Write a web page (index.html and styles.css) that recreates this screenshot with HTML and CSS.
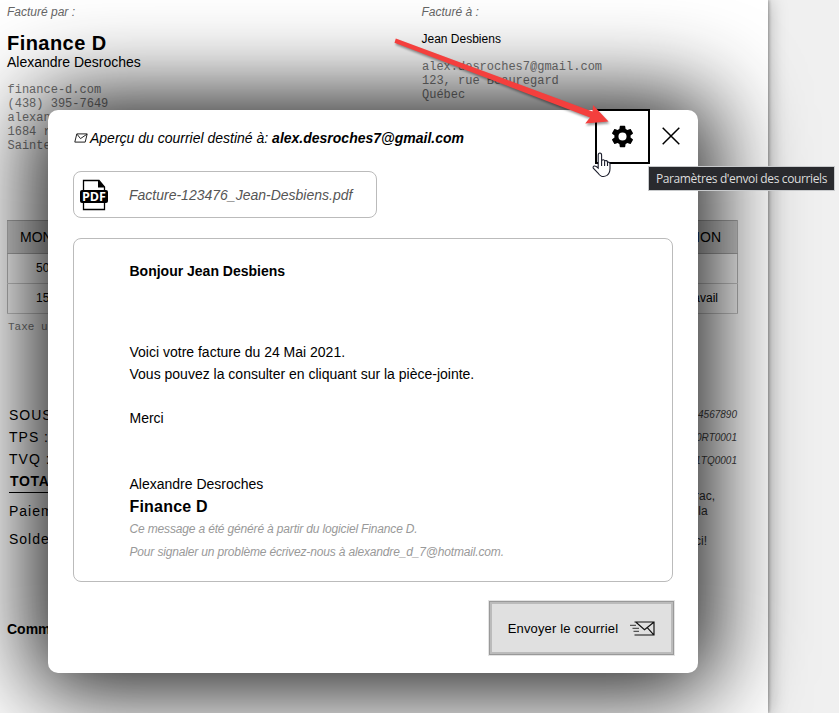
FILE: index.html
```html
<!DOCTYPE html>
<html lang="fr">
<head>
<meta charset="utf-8">
<title>Finance D</title>
<link rel="stylesheet" href="styles.css">
</head>
<body>
<main class="paper">
  <section class="parties">
    <div class="from">
      <p class="label">Facturé par :</p>
      <h1>Finance D</h1>
      <p class="owner">Alexandre Desroches</p>
      <address>finance-d.com<br>(438) 395-7649<br>alexan<br>1684 r<br>Sainte</address>
    </div>
    <div class="to">
      <p class="label">Facturé à :</p>
      <p class="client">Jean Desbiens</p>
      <address>alex.desroches7@gmail.com<br>123, rue Beauregard<br>Québec</address>
    </div>
  </section>
  <table class="items">
    <thead><tr><th class="amount">MON</th><th class="desc">ION</th></tr></thead>
    <tbody>
      <tr><td class="amount">50</td><td class="desc"></td></tr>
      <tr><td class="amount">15</td><td class="desc">avail</td></tr>
    </tbody>
  </table>
  <p class="tax-note">Taxe u</p>
  <section class="summary">
    <div class="totals">
      <p>SOUS</p><p>TPS :</p><p>TVQ :</p><p class="total">TOTA</p>
      <p class="payment">Paiem</p><p class="balance">Solde</p>
    </div>
    <div class="legal">
      <p class="number">4567890</p><p class="number">0RT0001</p><p class="number">1TQ0001</p>
      <div class="thanks">rac,<br>&nbsp;la<br><br>ci!</div>
    </div>
  </section>
  <p class="comments">Comm</p>
</main>

<section class="modal">
  <header class="modal-head">
    <h2><svg class="mail" viewBox="0 0 14 10"><path d="M2.8 .9H13.2L11.2 9.1H.8zM3 1.2L6.5 5.6L13 1.2" /></svg>Aperçu du courriel destiné à: <b>alex.desroches7@gmail.com</b></h2>
    <button class="settings" aria-label="Paramètres"><svg viewBox="0 0 24 24"><path d="M19.14 12.94c.04-.3.06-.61.06-.94s-.02-.64-.07-.94l2.03-1.58c.18-.14.23-.41.12-.61l-1.92-3.32c-.12-.22-.37-.29-.59-.22l-2.39.96c-.5-.38-1.03-.7-1.62-.94l-.36-2.54c-.04-.24-.24-.41-.48-.41h-3.84c-.24 0-.43.17-.47.41l-.36 2.54c-.59.24-1.13.57-1.62.94l-2.39-.96c-.22-.08-.47 0-.59.22L2.74 8.87c-.12.21-.08.47.12.61l2.03 1.58c-.05.3-.09.63-.09.94s.02.64.07.94l-2.03 1.58c-.18.14-.23.41-.12.61l1.92 3.32c.12.22.37.29.59.22l2.39-.96c.5.38 1.03.7 1.62.94l.36 2.54c.05.24.24.41.48.41h3.84c.24 0 .44-.17.47-.41l.36-2.54c.59-.24 1.13-.56 1.62-.94l2.39.96c.22.08.47 0 .59-.22l1.92-3.32c.12-.22.07-.47-.12-.61zM12 15.6A3.6 3.6 0 1 1 12 8.4a3.6 3.6 0 0 1 0 7.2z"/></svg></button>
    <button class="close" aria-label="Fermer"><svg viewBox="0 0 18 18"><path d="M.7 .7L17.3 17.3M17.3 .7L.7 17.3"/></svg></button>
  </header>
  <div class="attachment">
    <svg class="pdf" viewBox="0 0 28 32"><path class="sheet" d="M3.5 11V1.5H19L24.5 8V11M3.5 23V30.5H24.5V23"/><path d="M18 1L25 8.5H18z"/><rect y="11" width="28" height="13" rx="2"/><text x="14" y="21.8" textLength="24" lengthAdjust="spacingAndGlyphs">PDF</text></svg>
    <span>Facture-123476_Jean-Desbiens.pdf</span>
  </div>
  <article class="message">
    <p class="greeting">Bonjour Jean Desbiens</p>
    <p>Voici votre facture du 24 Mai 2021.</p>
    <p>Vous pouvez la consulter en cliquant sur la pièce-jointe.</p>
    <p class="merci">Merci</p>
    <p>Alexandre Desroches</p>
    <p class="company">Finance D</p>
    <p class="small">Ce message a été généré à partir du logiciel Finance D.</p>
    <p class="small">Pour signaler un problème écrivez-nous à alexandre_d_7@hotmail.com.</p>
  </article>
  <button class="send"><span>Envoyer le courriel</span><svg viewBox="0 0 25 15"><path d="M4.5 1H24V14H4.5M6 1.2L14.5 8.7L23.8 1.2M17.5 6.8L23.8 13.8"/><path class="speed" d="M0 4.4H6M2.5 7.4H9M3.5 10.4H9"/></svg></button>
</section>

<div class="tooltip">Paramètres d'envoi des courriels</div>
<svg class="arrow" viewBox="0 0 220 95"><path d="M5.8 3.5L202.5 76.6L203 70L218.5 86.5L195.2 88.4L200 82.5L4.5 7.8z"/></svg>
<svg class="cursor" viewBox="0 0 20 26"><path d="M6.2 15.5V3.3Q6.2 1 7.9 1T9.6 3.3V9Q10 7.6 11.4 7.8T12.6 9.4Q13.2 8.3 14.4 8.6T15.5 10.3Q18 9.6 18 12.2V16.5Q18 21 15 23.4Q12.5 25 9.5 24.2Q7.5 23.5 6 21L1.3 16.2Q.6 14.7 2.2 14Q3.8 13.7 6.2 16zM9.6 8V14M12.6 9.4V14M15.5 10.3V14"/></svg>
</body>
</html>
```
FILE: styles.css
```css
* { box-sizing: border-box; }
html, body { height: 100%; }
body {
  margin: 0;
  position: relative;
  overflow: hidden;
  background: #f0f0f0;
  color: #000;
  font-family: "Liberation Sans", Arial, sans-serif;
  font-size: 14px;
}
p, h1, h2 { margin: 0; }
button { font: inherit; color: inherit; padding: 0; border: 0; background: none; }

.paper {
  width: 768px;
  height: 713px;
  padding: 4px 30px 0 7px;
  background: #fff;
  box-shadow: 0 0 18px rgba(0, 0, 0, .3), 1px 0 3px rgba(0, 0, 0, .3);
}
.parties { display: grid; grid-template-columns: 414.5px 1fr; height: 216px; }
.label { font-size: 12px; line-height: 16px; font-style: italic; color: #666; }
h1 { margin-top: 11px; font-size: 20px; line-height: 24px; letter-spacing: .45px; }
.owner { line-height: 15px; }
.client { margin-top: 11px; font-size: 12px; line-height: 16px; }
address {
  font: 12px/14px "Liberation Mono", monospace;
  color: #777;
  margin-top: 13px;
  padding-left: .5px;
}
.items { width: 731px; border-collapse: collapse; table-layout: fixed; font-size: 12px; }
.items th { height: 33px; padding: 0; background: #d3d3d3; border: 1px solid #aaa; border-width: 1px 0; font-size: 14px; font-weight: 400; }
.items td { height: 30px; padding: 0 0 2px; border-bottom: 1px solid #ccc; }
.items .amount { text-align: left; padding-left: 28px; border-left: 1px solid #bbb; }
.items .desc { text-align: right; padding-right: 19px; border-right: 1px solid #bbb; }
.items th.amount { padding-left: 12px; }
.items th.desc { padding-right: 16px; }
.tax-note { margin: 6px 0 0 1px; font: 11px/14px "Liberation Mono", monospace; color: #777; }
.summary { display: flex; justify-content: space-between; height: 217px; margin-top: 70px; }
.totals { margin-left: 2px; width: 300px; letter-spacing: 1px; line-height: 22px; }
.total { font-weight: 700; border-bottom: 1px solid #000; padding-left: 1px; letter-spacing: .7px; }
.payment { margin-top: 7px; }
.balance { margin-top: 6px; }
.legal { width: 60px; margin: -1px 1px 0 0; }
.number { font-size: 10px; line-height: 23px; font-style: italic; text-align: right; color: #444; }
.thanks { margin: 17px 0 0 18px; font-size: 12px; line-height: 15px; color: #333; }
.comments { line-height: 16px; font-weight: 700; }

.modal {
  position: absolute;
  left: 48px;
  top: 110px;
  width: 650px;
  height: 563px;
  padding: 0 25px;
  display: flex;
  flex-direction: column;
  background: #fff;
  border-radius: 10px;
  box-shadow: 0 3px 90px 16px rgba(0, 0, 0, .9);
}
.modal-head { display: flex; height: 61px; margin-right: -7px; }
h2 { flex: 1; font-size: 14px; line-height: 20px; font-weight: 400; font-style: italic; padding-top: 18px; white-space: nowrap; }
.mail { width: 14px; height: 10px; margin: 0 2px 0 1px; fill: none; stroke: #222; }
.settings { width: 55px; height: 55px; margin-top: -1px; border: 2px solid #000; display: grid; place-items: center; }
.settings svg { width: 27px; height: 27px; }
.close { width: 18px; height: 18px; margin: 17px 0 0 12px; }
.close svg { display: block; width: 18px; height: 18px; fill: none; stroke: #000; stroke-width: 1.5; }
.attachment {
  width: 304px;
  height: 47px;
  padding-left: 6px;
  display: flex;
  align-items: center;
  gap: 21px;
  border: 1px solid #bbb;
  border-radius: 8px;
  color: #555;
  font-style: italic;
}
.pdf { width: 28px; height: 32px; }
.pdf .sheet { fill: none; stroke: #000; stroke-width: 1.3; }
.pdf text { fill: #fff; font: 700 12px "Open Sans", sans-serif; text-anchor: middle; }
.message {
  width: 600px;
  height: 344px;
  margin-top: 20px;
  padding: 21px 40px 0 55.5px;
  border: 1px solid #bbb;
  border-radius: 8px;
  line-height: 22px;
}
.greeting { font-weight: 700; margin-bottom: 59px; }
.merci { margin: 22px 0 44px; }
.company { font-size: 16px; line-height: 23px; font-weight: 700; letter-spacing: .2px; }
.small { font-size: 12px; line-height: 23px; font-style: italic; letter-spacing: -.16px; color: #999; }
.send {
  width: 185px;
  height: 54px;
  margin: 19px 0 0 416px;
  flex: none;
  display: flex;
  align-items: center;
  justify-content: center;
  gap: 12px;
  background: #e0e0e0;
  border: 1px solid #999;
  box-shadow: inset 0 0 0 2px #bbb, 0 0 0 1px #e4e4e4;
  font-size: 13px;
  letter-spacing: .15px;
}
.send svg { width: 25px; height: 15px; fill: none; stroke: #111; stroke-width: 1.2; }
.send .speed { stroke: #555; }

.tooltip {
  position: absolute;
  left: 648px;
  top: 166px;
  width: 187px;
  height: 25px;
  border: 1px solid #c8cacc;
  background: #292a2e;
  color: #ddd;
  font: 12px/23px "Open Sans", sans-serif;
  letter-spacing: -.37px;
  text-align: center;
  white-space: nowrap;
}
.arrow { position: absolute; left: 390px; top: 35px; width: 220px; height: 95px; fill: #f43f3d; filter: drop-shadow(1px 2px 1px rgba(0, 0, 0, .4)); }
.cursor { position: absolute; left: 592px; top: 152px; width: 20px; height: 26px; fill: #fff; stroke: #1b1d2b; stroke-width: 1.1; }
```
